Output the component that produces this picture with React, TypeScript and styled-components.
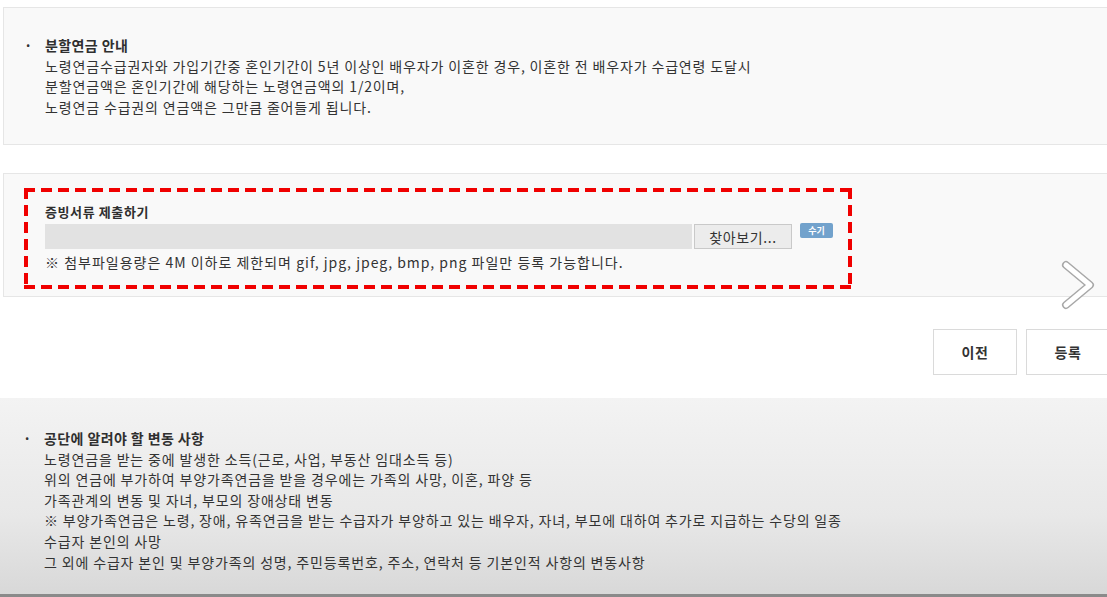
import styled, { createGlobalStyle } from 'styled-components';

const GlobalStyle = createGlobalStyle`
  html, body {
    margin: 0;
    padding: 0;
    background: #ffffff;
  }
  body {
    font-family: 'Noto Sans CJK KR', 'Noto Sans', sans-serif;
    color: #333333;
  }
`;

const Page = styled.div`
  position: relative;
  width: 1107px;
  height: 597px;
  overflow: hidden;
  padding-top: 7px;
  box-sizing: border-box;
`;

const InfoBox = styled.div`
  margin-left: 3px;
  height: 138px;
  box-sizing: border-box;
  background: #f9f9f9;
  border: 1px solid #e6e6e6;
  border-right: none;
  padding: 27px 0 0 20px;
`;

const BulletList = styled.div`
  display: flex;
  gap: 15px;
  font-size: 14px;
  line-height: 20.6px;
  letter-spacing: 0.85px;
`;

const Dot = styled.span`
  width: 6px;
  font-weight: 700;
`;

const Lines = styled.div`
  display: flex;
  flex-direction: column;
`;

const Title = styled.div`
  font-weight: 700;
  letter-spacing: 0.4px;
  color: #2f2f2f;
`;

const Line = styled.div`
  white-space: nowrap;
`;

const UploadBox = styled.div`
  margin: 28px 0 0 3px;
  height: 124px;
  box-sizing: border-box;
  background: #f9f9f9;
  border: 1px solid #e6e6e6;
  border-right: none;
  padding: 14px 0 0 20px;
`;

const dashH = 'repeating-linear-gradient(90deg, #f00000 0 11px, transparent 11px 17px)';
const dashV = 'repeating-linear-gradient(180deg, #f00000 0 11px, transparent 11px 17px)';

const DashedFrame = styled.div`
  width: 828px;
  height: 101px;
  box-sizing: border-box;
  padding: 14px 0 0 21px;
  background:
    ${dashH} top left / 100% 4px no-repeat,
    ${dashH} bottom left / 100% 4px no-repeat,
    ${dashV} top left / 4px 100% no-repeat,
    ${dashV} top right / 4px 100% no-repeat;
`;

const UploadTitle = styled.div`
  font-size: 13px;
  line-height: 20px;
  font-weight: 700;
  letter-spacing: 0.6px;
  color: #2f2f2f;
`;

const FileRow = styled.div`
  display: flex;
  align-items: flex-start;
  margin-top: 2px;
`;

const FileField = styled.div`
  width: 647px;
  height: 25px;
  background: #e2e2e2;
`;

const BrowseButton = styled.button`
  margin-left: 2px;
  width: 98px;
  height: 25px;
  background: #ececec;
  border: 1px solid #c9c9c9;
  font-family: inherit;
  font-size: 14px;
  letter-spacing: 0.6px;
  color: #333;
  padding: 0;
`;

const TagButton = styled.span`
  margin: -1px 0 0 8px;
  width: 33px;
  height: 15px;
  background: #72a2cc;
  border-radius: 2px;
  color: #fff;
  font-size: 9px;
  font-weight: 700;
  line-height: 15px;
  text-align: center;
`;

const Note = styled.div`
  margin-top: 3px;
  font-size: 14px;
  line-height: 20px;
  letter-spacing: 1px;
  white-space: nowrap;
`;

const ButtonRow = styled.div`
  display: flex;
  justify-content: flex-end;
  gap: 9px;
  margin-top: 32px;
  margin-right: -3px;
`;

const ActionButton = styled.button`
  width: 84px;
  height: 46px;
  background: #fff;
  border: 1px solid #dadada;
  font-family: inherit;
  font-size: 14px;
  font-weight: 700;
  letter-spacing: 0.6px;
  color: #333;
`;

const NoticeBox = styled.div`
  margin-top: 23px;
  height: 199px;
  box-sizing: border-box;
  background: linear-gradient(180deg, #f3f3f3 0%, #e8e8e8 60%, #d8d8d8 100%);
  border-bottom: 3px solid #8a8a8a;
  padding: 30px 0 0 23px;
`;

const NextArrow = styled.div`
  position: absolute;
  left: 1060px;
  top: 260px;
  width: 36px;
  height: 50px;
`;

const ChevronIcon = () => (
  <svg width="36" height="50" viewBox="0 0 36 50">
    <polyline points="6,5 30,25 6,45" fill="none" stroke="#a8a8a8" strokeWidth="8" strokeLinecap="round" strokeLinejoin="round" />
    <polyline points="6,5 30,25 6,45" fill="none" stroke="#ffffff" strokeWidth="5" strokeLinecap="round" strokeLinejoin="round" />
  </svg>
);

const App = () => {
  return (
    <Page>
      <GlobalStyle />
      <InfoBox>
        <BulletList>
          <Dot>·</Dot>
          <Lines>
            <Title>분할연금 안내</Title>
            <Line>노령연금수급권자와 가입기간중 혼인기간이 5년 이상인 배우자가 이혼한 경우, 이혼한 전 배우자가 수급연령 도달시</Line>
            <Line>분할연금액은 혼인기간에 해당하는 노령연금액의 1/2이며,</Line>
            <Line>노령연금 수급권의 연금액은 그만큼 줄어들게 됩니다.</Line>
          </Lines>
        </BulletList>
      </InfoBox>

      <UploadBox>
        <DashedFrame>
          <UploadTitle>증빙서류 제출하기</UploadTitle>
          <FileRow>
            <FileField />
            <BrowseButton type="button">찾아보기...</BrowseButton>
            <TagButton>수기</TagButton>
          </FileRow>
          <Note>※ 첨부파일용량은 4M 이하로 제한되며 gif, jpg, jpeg, bmp, png 파일만 등록 가능합니다.</Note>
        </DashedFrame>
      </UploadBox>

      <ButtonRow>
        <ActionButton type="button">이전</ActionButton>
        <ActionButton type="button">등록</ActionButton>
      </ButtonRow>

      <NoticeBox>
        <BulletList>
          <Dot>·</Dot>
          <Lines>
            <Title>공단에 알려야 할 변동 사항</Title>
            <Line>노령연금을 받는 중에 발생한 소득(근로, 사업, 부동산 임대소득 등)</Line>
            <Line>위의 연금에 부가하여 부양가족연금을 받을 경우에는 가족의 사망, 이혼, 파양 등</Line>
            <Line>가족관계의 변동 및 자녀, 부모의 장애상태 변동</Line>
            <Line>※ 부양가족연금은 노령, 장애, 유족연금을 받는 수급자가 부양하고 있는 배우자, 자녀, 부모에 대하여 추가로 지급하는 수당의 일종</Line>
            <Line>수급자 본인의 사망</Line>
            <Line>그 외에 수급자 본인 및 부양가족의 성명, 주민등록번호, 주소, 연락처 등 기본인적 사항의 변동사항</Line>
          </Lines>
        </BulletList>
      </NoticeBox>

      <NextArrow>
        <ChevronIcon />
      </NextArrow>
    </Page>
  );
};

export default App;
